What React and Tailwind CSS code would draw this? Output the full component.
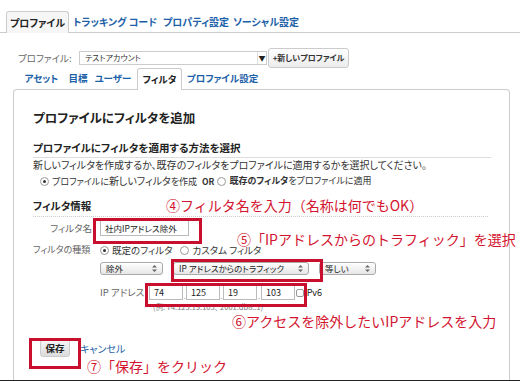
const Radio = ({ on }) => (
  <span className="inline-flex w-[9px] h-[9px] rounded-full border border-[#999] bg-white items-center justify-center shrink-0">
    {on && <span className="w-[3px] h-[3px] rounded-full bg-[#333]" />}
  </span>
);

const UpDown = () => (
  <svg width="5" height="7" viewBox="0 0 5 7">
    <path d="M2.5 0L5 2.6H0z M2.5 7L0 4.4H5z" fill="#666" />
  </svg>
);

function Select({ w, children }) {
  return (
    <div
      className={`${w} h-[13px] flex items-center justify-between pl-[5px] pr-[5px] rounded-[3px] border border-[#aaa] bg-gradient-to-b from-white to-[#e6e6e6] text-[8.5px] leading-none text-[#222] whitespace-nowrap`}
    >
      <span>{children}</span>
      <UpDown />
    </div>
  );
}

function IpBox({ value }) {
  return (
    <div className="w-[34px] h-[15px] border border-[#bbb] bg-white pl-[4px] flex items-center text-[9px] text-[#222]">
      {value}
    </div>
  );
}

export default function App() {
  const topTabs = [
    { label: "トラッキング コード", w: "w-[92px]" },
    { label: "プロパティ設定", w: "w-[70px]" },
    { label: "ソーシャル設定", w: "w-[70px]" },
  ];

  return (
    <div className="relative w-[520px] h-[381px] overflow-hidden bg-white border-b border-[#222] flex flex-col font-['Noto_Sans_CJK_JP',sans-serif] [font-feature-settings:'palt'] text-[#333] whitespace-nowrap">
      {/* top tabs */}
      <div className="flex items-end h-[33px] pl-[6px] border-b border-[#ccc] shrink-0">
        <div className="w-[63px] h-[22px] -mb-px flex items-center justify-center bg-[#f6f6f6] border border-b-0 border-[#ccc] rounded-t-[3px] text-[10px] font-bold text-[#222]">
          プロファイル
        </div>
        {topTabs.map((t) => (
          <div
            key={t.label}
            className={`${t.w} h-[21px] flex items-center justify-center text-[10px] font-bold text-[#1d5fa8]`}
          >
            {t.label}
          </div>
        ))}
      </div>

      {/* profile row */}
      <div className="flex items-center h-[20px] mt-[15px] pl-[18px] shrink-0">
        <span className="w-[61px] text-[9.5px] text-[#666]">プロファイル:</span>
        <div className="w-[188px] h-[14px] flex border border-[#ccc] bg-white">
          <span className="flex-1 pl-[5px] text-[8px] leading-[12px] text-[#333]">テストアカウント</span>
          <span className="w-[9px] flex items-center justify-center border-l border-[#ddd] text-[7px] text-[#222]">▼</span>
        </div>
        <div className="ml-[1px] w-[81px] h-[20px] flex items-center justify-center rounded-[3px] border border-[#ccc] bg-gradient-to-b from-white to-[#ececec] text-[8px] font-bold text-[#333]">
          +新しいプロファイル
        </div>
      </div>

      {/* sub tabs */}
      <div className="flex items-end h-[21px] pl-[19px] shrink-0 relative z-10">
        <div className="w-[45px] h-[21px] flex items-center justify-center text-[9.5px] font-bold text-[#1d5fa8]">アセット</div>
        <div className="w-[28px] h-[21px] flex items-center justify-center text-[9.5px] font-bold text-[#1d5fa8]">目標</div>
        <div className="w-[42px] h-[21px] flex items-center justify-center text-[9.5px] font-bold text-[#1d5fa8]">ユーザー</div>
        <div className="ml-[3px] w-[45px] h-[22px] -mb-px flex items-center justify-center bg-white border border-b-0 border-[#ccc] rounded-t-[3px] text-[9.5px] font-bold text-[#222]">
          フィルタ
        </div>
        <div className="w-[81px] h-[21px] flex items-center justify-center text-[9.5px] font-bold text-[#1d5fa8]">プロファイル設定</div>
      </div>

      {/* panel */}
      <div className="ml-[13px] w-[497px] flex-1 border border-b-0 border-[#ccc] rounded-t-[4px] pt-[19px] pl-[19px] pr-[18px] flex flex-col">
        <h1 className="text-[12.5px] leading-[18px] font-bold text-[#222]">プロファイルにフィルタを追加</h1>

        <h2 className="mt-[13px] pb-[1px] text-[10.5px] leading-[16px] font-bold text-[#222] border-b border-[#ddd]">
          プロファイルにフィルタを適用する方法を選択
        </h2>
        <p className="text-[10px] leading-[14px] text-[#333]">
          新しいフィルタを作成するか、既存のフィルタをプロファイルに適用するかを選択してください。
        </p>
        <div className="mt-[2px] pl-[7px] h-[14px] flex items-center gap-[3px] text-[9px] text-[#333]">
          <Radio on />
          <span>
            プロファイルに<span className="text-[10px]">新しいフィルタ</span>を作成
          </span>
          <span className="ml-[2px] font-bold text-[8.5px]">OR</span>
          <Radio />
          <span>
            <span className="font-bold">既存のフィルタ</span>をプロファイルに適用
          </span>
        </div>

        <h2 className="mt-[10px] pb-[2px] w-[455px] text-[10.5px] leading-[16px] font-bold text-[#222] border-b border-dotted border-[#ccc]">
          フィルタ情報
        </h2>

        {/* filter name */}
        <div className="mt-[3px] flex items-center">
          <span className="w-[59px] text-right text-[9.5px] text-[#666]">フィルタ名</span>
          <div className="ml-[8px] w-[89px] h-[16px] border border-[#bbb] bg-white pl-[4px] flex items-center text-[8.5px] text-[#222]">
            社内IPアドレス除外
          </div>
        </div>

        {/* filter type */}
        <div className="mt-[7px] h-[14px] flex items-center leading-[10px]">
          <span className="w-[59px] text-[9px] text-[#666]">フィルタの種類</span>
          <div className="ml-[8px] flex items-center gap-[3px] text-[9.5px] text-[#333]">
            <Radio on />
            <span>既定のフィルタ</span>
            <span className="w-[2px]" />
            <Radio />
            <span>カスタム フィルタ</span>
          </div>
        </div>

        <div className="mt-[5px] ml-[67px] flex items-center gap-[10px]">
          <Select w="w-[63px]">除外</Select>
          <Select w="w-[136px]">IP アドレスからのトラフィック</Select>
          <Select w="w-[57px]">等しい</Select>
        </div>

        {/* ip address */}
        <div className="mt-[10px] ml-[67px] flex items-center">
          <span className="w-[49px] text-[9.5px] text-[#666]">IP アドレス</span>
          <IpBox value="74" />
          <span className="w-[3px] self-end text-[8px] leading-[8px] text-[#999] text-center">.</span>
          <IpBox value="125" />
          <span className="w-[3px] self-end text-[8px] leading-[8px] text-[#999] text-center">.</span>
          <IpBox value="19" />
          <span className="w-[4px] self-end text-[8px] leading-[8px] text-[#999] text-center">.</span>
          <IpBox value="103" />
          <span className="ml-[1px] w-[8px] h-[8px] border border-[#999] rounded-[2px] bg-white" />
          <span className="text-[9px] text-[#222]">IPv6</span>
        </div>
        <p className="mt-[3px] ml-[120px] text-[7.5px] leading-[8px] text-[#777]">
          (例: 74.125.19.103、 2001:db8::1)
        </p>

        <div className="mt-[28px] ml-[7px] flex items-center">
          <div className="w-[30px] h-[18px] flex items-center justify-center rounded-[3px] border border-[#ccc] bg-gradient-to-b from-[#f6f6f6] to-[#dcdcdc] text-[9.5px] font-bold text-[#222]">
            保存
          </div>
          <span className="ml-[10px] text-[10px] text-[#1d5fa8]">キャンセル</span>
        </div>
      </div>

      {/* annotations */}
      <div className="absolute left-[93px] top-[218px] w-[109px] h-[26px] border-[3px] border-[#c8102e]" />
      <div className="absolute left-[171px] top-[259px] w-[152px] h-[23px] border-[3px] border-[#c8102e]" />
      <div className="absolute left-[145px] top-[283px] w-[162px] h-[24px] border-[3px] border-[#c8102e]" />
      <div className="absolute left-[29px] top-[338px] w-[52px] h-[31px] border-[3px] border-[#c8102e]" />

      <p className="absolute left-[166px] top-[197px] text-[14px] leading-[16px] text-[#d3142f] [font-feature-settings:normal]">
        ④フィルタ名を入力（名称は何でもOK）
      </p>
      <p className="absolute left-[237px] top-[233px] text-[14px] leading-[12px] text-[#d3142f] [font-feature-settings:normal]">
        ⑤「IPアドレスからのトラフィック」を選択
      </p>
      <p className="absolute left-[232px] top-[314px] text-[14px] leading-[14px] text-[#d3142f] [font-feature-settings:normal]">
        ⑥アクセスを除外したいIPアドレスを入力
      </p>
      <p className="absolute left-[87px] top-[358px] text-[14px] leading-[16px] text-[#d3142f] [font-feature-settings:normal]">
        ⑦「保存」をクリック
      </p>
    </div>
  );
}
